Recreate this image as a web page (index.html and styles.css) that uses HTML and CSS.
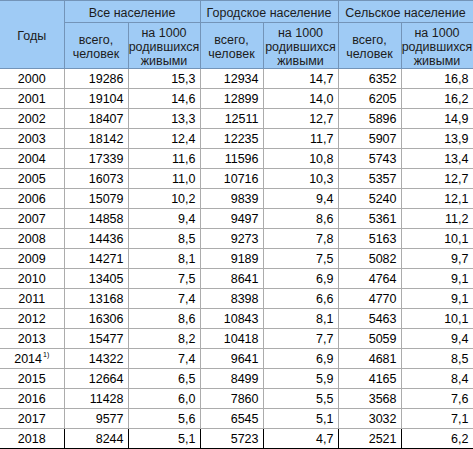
FILE: index.html
```html
<!DOCTYPE html>
<html lang="ru">
<head>
<meta charset="utf-8">
<link rel="stylesheet" href="styles.css">
</head>
<body>
<table class="stats">
  <colgroup>
    <col class="c-year">
    <col class="c-a">
    <col class="c-b">
    <col class="c-c">
    <col class="c-d">
    <col class="c-e">
    <col class="c-f">
  </colgroup>
  <thead>
    <tr class="h1">
      <th rowspan="2" class="first">Годы</th>
      <th colspan="2">Все население</th>
      <th colspan="2">Городское население</th>
      <th colspan="2">Сельское население</th>
    </tr>
    <tr class="h2">
      <th>всего,<br>человек</th>
      <th>на 1000<br>родившихся<br>живыми</th>
      <th>всего,<br>человек</th>
      <th>на 1000<br>родившихся<br>живыми</th>
      <th>всего,<br>человек</th>
      <th>на 1000<br>родившихся<br>живыми</th>
    </tr>
  </thead>
  <tbody>
    <tr><td class="first">2000</td><td>19286</td><td>15,3</td><td>12934</td><td>14,7</td><td>6352</td><td>16,8</td></tr>
    <tr><td class="first">2001</td><td>19104</td><td>14,6</td><td>12899</td><td>14,0</td><td>6205</td><td>16,2</td></tr>
    <tr><td class="first">2002</td><td>18407</td><td>13,3</td><td>12511</td><td>12,7</td><td>5896</td><td>14,9</td></tr>
    <tr><td class="first">2003</td><td>18142</td><td>12,4</td><td>12235</td><td>11,7</td><td>5907</td><td>13,9</td></tr>
    <tr><td class="first">2004</td><td>17339</td><td>11,6</td><td>11596</td><td>10,8</td><td>5743</td><td>13,4</td></tr>
    <tr><td class="first">2005</td><td>16073</td><td>11,0</td><td>10716</td><td>10,3</td><td>5357</td><td>12,7</td></tr>
    <tr><td class="first">2006</td><td>15079</td><td>10,2</td><td>9839</td><td>9,4</td><td>5240</td><td>12,1</td></tr>
    <tr><td class="first">2007</td><td>14858</td><td>9,4</td><td>9497</td><td>8,6</td><td>5361</td><td>11,2</td></tr>
    <tr><td class="first">2008</td><td>14436</td><td>8,5</td><td>9273</td><td>7,8</td><td>5163</td><td>10,1</td></tr>
    <tr><td class="first">2009</td><td>14271</td><td>8,1</td><td>9189</td><td>7,5</td><td>5082</td><td>9,7</td></tr>
    <tr><td class="first">2010</td><td>13405</td><td>7,5</td><td>8641</td><td>6,9</td><td>4764</td><td>9,1</td></tr>
    <tr><td class="first">2011</td><td>13168</td><td>7,4</td><td>8398</td><td>6,6</td><td>4770</td><td>9,1</td></tr>
    <tr><td class="first">2012</td><td>16306</td><td>8,6</td><td>10843</td><td>8,1</td><td>5463</td><td>10,1</td></tr>
    <tr><td class="first">2013</td><td>15477</td><td>8,2</td><td>10418</td><td>7,7</td><td>5059</td><td>9,4</td></tr>
    <tr><td class="first">2014<sup class="note">1)</sup></td><td>14322</td><td>7,4</td><td>9641</td><td>6,9</td><td>4681</td><td>8,5</td></tr>
    <tr><td class="first">2015</td><td>12664</td><td>6,5</td><td>8499</td><td>5,9</td><td>4165</td><td>8,4</td></tr>
    <tr><td class="first">2016</td><td>11428</td><td>6,0</td><td>7860</td><td>5,5</td><td>3568</td><td>7,6</td></tr>
    <tr><td class="first">2017</td><td>9577</td><td>5,6</td><td>6545</td><td>5,1</td><td>3032</td><td>7,1</td></tr>
    <tr class="last"><td class="first">2018</td><td>8244</td><td>5,1</td><td>5723</td><td>4,7</td><td>2521</td><td>6,2</td></tr>
  </tbody>
</table>
</body>
</html>
```
FILE: styles.css
```css
html, body {
  margin: 0;
  padding: 0;
  background: #ffffff;
}

.stats {
  border-collapse: collapse;
  table-layout: fixed;
  width: 473px;
  font-family: "Liberation Sans", Arial, sans-serif;
  font-size: 12.5px;
  color: #000;
}

.c-year { width: 64px; }
.c-a { width: 64px; }
.c-b { width: 72px; }
.c-c { width: 63px; }
.c-d { width: 75px; }
.c-e { width: 63px; }
.c-f { width: 72px; }

.stats th {
  background: #9fcbf5;
  border: 1px solid #7394b8;
  font-weight: normal;
  font-size: 12.5px;
  color: #1c1c1c;
  padding: 2px 0 0;
  line-height: 14px;
  text-align: center;
}

.stats th.first {
  border-left: none;
}

.h1 th {
  height: 19px;
}

.h2 th {
  height: 43px;
}

.stats td {
  border: 1px solid #acacac;
  height: 19px;
  padding: 0 4px 0 2px;
  text-align: right;
  line-height: 14px;
}

.stats td.first {
  text-align: center;
  border-left: none;
  padding: 0;
}

.stats tr.last td {
  border-top: 1px solid #000;
  border-left: 1px solid #000;
  border-right: 1px solid #000;
  border-bottom: 1px solid #000;
}

.stats tr.last td.first {
  border-left: none;
}

.note {
  font-size: 7px;
  vertical-align: 6px;
  line-height: 0;
  margin-left: 1px;
}
```
